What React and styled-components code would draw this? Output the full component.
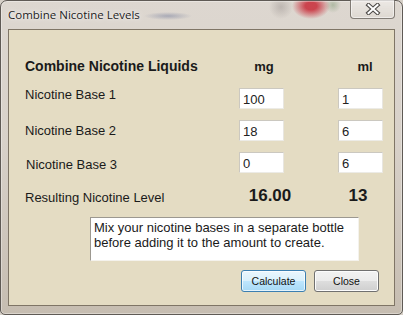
import React from "react";
import styled, { createGlobalStyle } from "styled-components";

const Global = createGlobalStyle`
  html, body {
    margin: 0;
    padding: 0;
    width: 403px;
    height: 315px;
    overflow: hidden;
    background: #d6d0c8;
  }
  * { box-sizing: border-box; }
`;

const Window = styled.div`
  width: 403px;
  height: 315px;
  display: flex;
  flex-direction: column;
  padding: 0 7px 8px;
  border: 1px solid #5f5a55;
  border-radius: 7px 7px 5px 5px;
  background:
    radial-gradient(ellipse 19px 13px at 310px 5px, rgba(200, 42, 55, 0.85) 30%, rgba(200, 42, 55, 0) 100%),
    radial-gradient(ellipse 8px 8px at 332px 4px, rgba(90, 130, 80, 0.35), rgba(90, 130, 80, 0) 100%),
    radial-gradient(ellipse 12px 12px at 280px 6px, rgba(95, 85, 85, 0.25), rgba(95, 85, 85, 0) 100%),
    radial-gradient(ellipse 24px 4px at 167px 15px, rgba(105, 115, 150, 0.45), rgba(105, 115, 150, 0) 100%),
    linear-gradient(180deg, #ddd7d0 0%, #d8d1c9 45%, #c6bdb1 100%);
  box-shadow: inset 0 0 0 1px rgba(255, 255, 255, 0.35);
`;

const TitleBar = styled.div`
  height: 28px;
  display: flex;
  align-items: flex-start;
  justify-content: space-between;
`;

const Title = styled.span`
  padding-top: 6px;
  font-family: "Open Sans", "Liberation Sans", sans-serif;
  font-size: 11.5px;
  line-height: 16px;
  color: #1c1c1c;
  text-shadow: 0 0 6px rgba(255, 255, 255, 0.9), 0 0 2px rgba(255, 255, 255, 0.8);
`;

const CloseBox = styled.div`
  width: 45px;
  height: 19px;
  margin: -1px 0 0 0;
  display: flex;
  align-items: center;
  justify-content: center;
  border: 1px solid rgba(95, 88, 82, 0.75);
  border-top: none;
  border-radius: 0 0 4px 4px;
  background: linear-gradient(180deg, rgba(255, 255, 255, 0.45), rgba(225, 220, 214, 0.35));
  box-shadow: inset 0 0 0 1px rgba(255, 255, 255, 0.5);
`;

const Client = styled.div`
  flex: 1;
  display: flex;
  flex-direction: column;
  padding-left: 16px;
  background: #e4dcc3;
  border: 1px solid #7f7566;
  font-family: "Liberation Sans", Arial, sans-serif;
  color: #1a1a1a;
`;

const Form = styled.div`
  margin-top: 28px;
  display: grid;
  grid-template-columns: 214px 99px 45px;
  grid-template-rows: 30px 32px 32px 32px 33px;
  align-items: start;
`;

const Head = styled.div`
  font-size: 13px;
  font-weight: bold;
  line-height: 15px;
  text-align: center;
  width: ${(p) => p.$center * 2}px;
  margin-top: 1px;
`;

const HeadLabel = styled.div`
  font-size: 14px;
  font-weight: bold;
  line-height: 15px;
  margin-top: 1px;
  white-space: nowrap;
`;

const Label = styled.div`
  font-size: 13px;
  line-height: 15px;
  margin-top: ${(p) => p.$top}px;
  margin-left: ${(p) => p.$left || 0}px;
`;

const Field = styled.input`
  width: 45px;
  height: 21px;
  padding: 1px 3px 0;
  border: 1px solid;
  border-color: #cbc8c0 #e8e6e0 #ecebe6 #cbc8c0;
  background: #fff;
  font-family: "Liberation Sans", Arial, sans-serif;
  font-size: 13px;
  color: #222;
  outline: none;
`;

const Value = styled.div`
  font-size: 17px;
  font-weight: bold;
  line-height: 19px;
  text-align: center;
  width: ${(p) => p.$center * 2}px;
  margin-top: 2px;
`;

const Note = styled.div`
  margin-left: 65px;
  width: 269px;
  height: 44px;
  padding: 2px 3px;
  background: #fff;
  border: 1px solid;
  border-color: #9c9890 #f4f2ec #f4f2ec #9c9890;
  font-size: 13px;
  line-height: 15px;
  color: #1a1a1a;
`;

const Buttons = styled.div`
  margin-top: 9px;
  padding-right: 15px;
  display: flex;
  justify-content: flex-end;
  gap: 8px;
`;

const Button = styled.button`
  width: 65px;
  height: 22px;
  padding: 0;
  font-family: "Liberation Sans", Arial, sans-serif;
  font-size: 10.5px;
  color: #111;
  border: 1px solid ${(p) => (p.$focused ? "#3c7fb1" : "#707070")};
  border-radius: 3px;
  background: ${(p) =>
    p.$focused
      ? "linear-gradient(180deg, #eaf6fd 0%, #d9f0fc 50%, #bee6fd 51%, #a7d9f5 100%)"
      : "linear-gradient(180deg, #f2f2f2 0%, #ebebeb 50%, #dddddd 51%, #cfcfcf 100%)"};
  box-shadow: inset 0 0 0 1px ${(p) => (p.$focused ? "rgba(255,255,255,0.7)" : "#fcfcfc")};
`;

const CloseGlyph = () => (
  <svg width="16" height="12" viewBox="0 0 16 12">
    <path d="M3.5 2 L12.5 10 M12.5 2 L3.5 10" stroke="#4e4b48" strokeWidth="4.2" strokeLinecap="square" />
    <path d="M3.5 2 L12.5 10 M12.5 2 L3.5 10" stroke="#ffffff" strokeWidth="2" strokeLinecap="square" />
  </svg>
);

const rows = [
  { name: "Nicotine Base 1", mg: "100", ml: "1", top: -1, left: 0 },
  { name: "Nicotine Base 2", mg: "18", ml: "6", top: 3, left: 0 },
  { name: "Nicotine Base 3", mg: "0", ml: "6", top: 5, left: 1 },
];

export default function App() {
  return (
    <>
      <Global />
      <Window>
        <TitleBar>
          <Title>Combine Nicotine Levels</Title>
          <CloseBox>
            <CloseGlyph />
          </CloseBox>
        </TitleBar>
        <Client>
          <Form>
            <HeadLabel>Combine Nicotine Liquids</HeadLabel>
            <Head $center={25}>mg</Head>
            <Head $center={27}>ml</Head>

            {rows.map((r) => (
              <React.Fragment key={r.name}>
                <Label $top={r.top} $left={r.left}>{r.name}</Label>
                <Field defaultValue={r.mg} />
                <Field defaultValue={r.ml} />
              </React.Fragment>
            ))}

            <Label $top={6}>Resulting Nicotine Level</Label>
            <Value $center={31}>16.00</Value>
            <Value $center={20}>13</Value>
          </Form>
          <Note>
            Mix your nicotine bases in a separate bottle before adding it to the amount to create.
          </Note>
          <Buttons>
            <Button $focused>Calculate</Button>
            <Button>Close</Button>
          </Buttons>
        </Client>
      </Window>
    </>
  );
}
